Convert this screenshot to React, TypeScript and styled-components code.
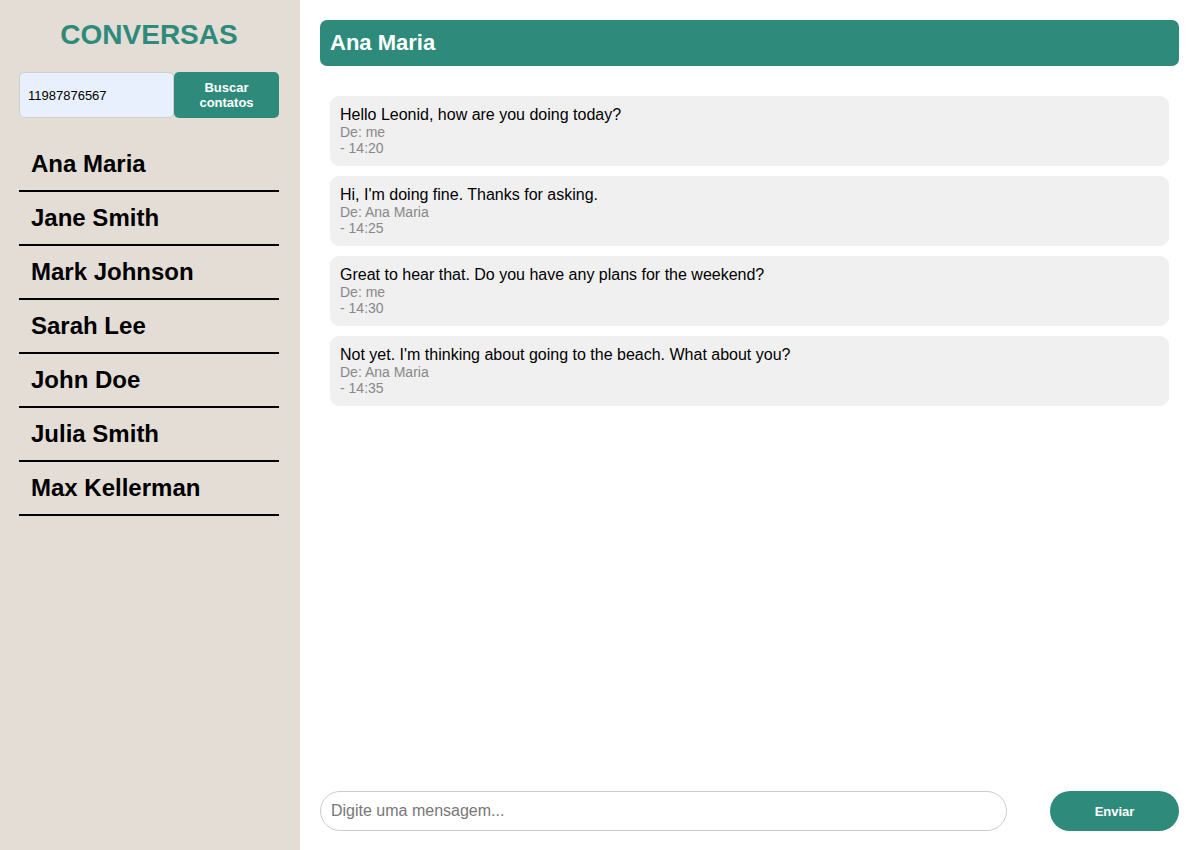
import React from "react";
import styled, { createGlobalStyle } from "styled-components";

const Global = createGlobalStyle`
  html, body { margin: 0; padding: 0; height: 100%; }
  body { font-family: "Liberation Sans", Arial, sans-serif; }
  #root { height: 100%; }
`;

const Layout = styled.div`
  display: flex;
  width: 1197px;
  height: 850px;
`;

const Sidebar = styled.aside`
  width: 300px;
  flex-shrink: 0;
  background: #e3ddd6;
  padding: 19px 21px 19px 19px;
  box-sizing: border-box;
  display: flex;
  flex-direction: column;
`;

const Title = styled.h1`
  margin: 0;
  text-align: center;
  color: #2e8b7b;
  font-size: 28px;
  font-weight: bold;
  line-height: 32px;
`;

const SearchRow = styled.div`
  display: flex;
  margin-top: 21px;
  height: 46px;
`;

const SearchInput = styled.input`
  width: 155px;
  box-sizing: border-box;
  background: #e8f0fe;
  border: 1px solid #cfcfcf;
  border-radius: 5px;
  padding: 0 8px;
  font-family: "Liberation Sans", Arial, sans-serif;
  font-size: 13px;
  color: #000;
  outline: none;
`;

const SearchButton = styled.button`
  flex: 1;
  background: #2e8b7b;
  color: #fff;
  border: none;
  border-radius: 5px;
  font-family: "Liberation Sans", Arial, sans-serif;
  font-size: 13px;
  font-weight: bold;
  line-height: 15px;
  padding: 0 10px;
`;

const ContactList = styled.ul`
  list-style: none;
  margin: 20px 0 0;
  padding: 0;
`;

const Contact = styled.li`
  padding: 12px 12px;
  border-bottom: 2px solid #000;
  font-size: 24px;
  font-weight: bold;
  line-height: 28px;
  color: #000;
`;

const Main = styled.main`
  flex: 1;
  padding: 20px 18px 19px 20px;
  display: flex;
  flex-direction: column;
  background: #fff;
`;

const Header = styled.div`
  height: 46px;
  background: #2e8b7b;
  border-radius: 7px;
  color: #fff;
  font-size: 22px;
  font-weight: bold;
  display: flex;
  align-items: center;
  padding: 0 10px;
`;

const Messages = styled.div`
  flex: 1;
  padding: 30px 10px 0;
  display: flex;
  flex-direction: column;
  gap: 10px;
`;

const Bubble = styled.div`
  background: #f0f0f0;
  border-radius: 9px;
  padding: 10px;
  display: flex;
  flex-direction: column;
`;

const Text = styled.span`
  font-size: 16px;
  line-height: 18px;
  color: #000;
`;

const Meta = styled.span`
  font-size: 14px;
  line-height: 16px;
  color: #888;
`;

const Composer = styled.div`
  display: flex;
  align-items: center;
  gap: 43px;
`;

const MessageInput = styled.input`
  width: 687px;
  height: 40px;
  box-sizing: border-box;
  border: 1px solid #ccc;
  border-radius: 20px;
  padding: 0 10px;
  font-family: "Liberation Sans", Arial, sans-serif;
  font-size: 16px;
  outline: none;
  &::placeholder { color: #777; }
`;

const SendButton = styled.button`
  flex: 1;
  height: 40px;
  border: none;
  border-radius: 20px;
  background: #2e8b7b;
  color: #fff;
  font-family: "Liberation Sans", Arial, sans-serif;
  font-size: 13px;
  font-weight: bold;
`;

const contacts = ["Ana Maria", "Jane Smith", "Mark Johnson", "Sarah Lee", "John Doe", "Julia Smith", "Max Kellerman"];

const messages = [
  { text: "Hello Leonid, how are you doing today?", from: "me", time: "14:20" },
  { text: "Hi, I'm doing fine. Thanks for asking.", from: "Ana Maria", time: "14:25" },
  { text: "Great to hear that. Do you have any plans for the weekend?", from: "me", time: "14:30" },
  { text: "Not yet. I'm thinking about going to the beach. What about you?", from: "Ana Maria", time: "14:35" },
];

export default function App() {
  return (
    <>
      <Global />
      <Layout>
        <Sidebar>
          <Title>CONVERSAS</Title>
          <SearchRow>
            <SearchInput defaultValue="11987876567" />
            <SearchButton>Buscar contatos</SearchButton>
          </SearchRow>
          <ContactList>
            {contacts.map((c) => (
              <Contact key={c}>{c}</Contact>
            ))}
          </ContactList>
        </Sidebar>
        <Main>
          <Header>Ana Maria</Header>
          <Messages>
            {messages.map((m) => (
              <Bubble key={m.time}>
                <Text>{m.text}</Text>
                <Meta>De: {m.from}</Meta>
                <Meta>- {m.time}</Meta>
              </Bubble>
            ))}
          </Messages>
          <Composer>
            <MessageInput placeholder="Digite uma mensagem..." />
            <SendButton>Enviar</SendButton>
          </Composer>
        </Main>
      </Layout>
    </>
  );
}
